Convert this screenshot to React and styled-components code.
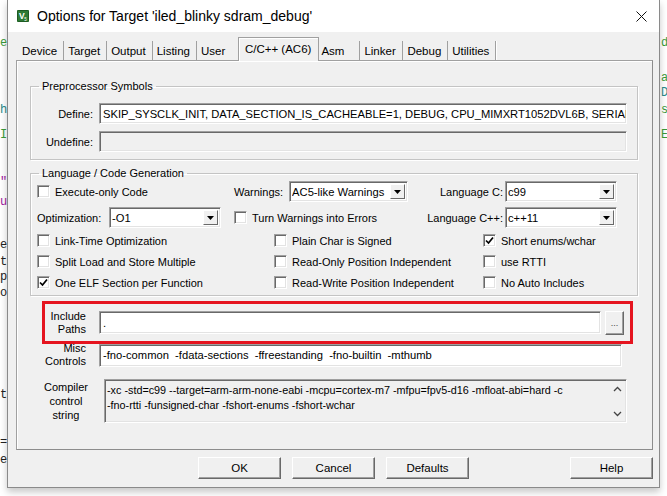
import React from "react";
import styled, { createGlobalStyle } from "styled-components";

const GlobalStyle = createGlobalStyle`
  html, body {
    margin: 0;
    padding: 0;
    background: #fff;
    overflow: hidden;
  }
  body {
    font-family: "Liberation Sans", Arial, sans-serif;
    color: #000;
  }
`;

const Desk = styled.div`
  display: flex;
  width: 667px;
  height: 496px;
  background: #fff;
`;

/* editor text peeking out on both sides of the dialog */
const Strip = styled.div`
  width: 7px;
  flex: none;
  overflow: hidden;
  display: flex;
  flex-direction: column;
  padding-left: ${(p) => (p.$right ? "1px" : "0")};
  box-sizing: border-box;
  font-family: "Liberation Mono", monospace;
  font-size: 12px;
`;

const CodeLine = styled.div`
  height: 14px;
  line-height: 14px;
  white-space: pre;
  color: ${(p) => p.$color};
`;

const Dialog = styled.div`
  position: relative;
  z-index: 1;
  width: 653px;
  height: 488px;
  flex: none;
  box-sizing: border-box;
  border: 1px solid #8a8a8a;
  border-top: none;
  background: #f0f0f0;
  display: flex;
  flex-direction: column;
  box-shadow: 0 4px 7px rgba(0, 0, 0, 0.22);
`;

const TitleBar = styled.div`
  height: 32px;
  flex: none;
  background: #fff;
  display: flex;
  align-items: center;
  padding: 0 12px 0 9px;
  gap: 8px;
`;

const Title = styled.div`
  flex: 1;
  font-size: 14px;
  color: #000;
  white-space: nowrap;
`;

const Body = styled.div`
  flex: 1;
  display: flex;
  flex-direction: column;
  padding: 5px 6px 8px 8px;
`;

const TabStrip = styled.div`
  position: relative;
  z-index: 2;
  display: flex;
  align-items: flex-end;
  height: 24px;
  margin-bottom: -1px;
  padding-left: 2px;
`;

const Tab = styled.div`
  box-sizing: border-box;
  min-width: 43px;
  font-size: 11.5px;
  white-space: nowrap;
  display: flex;
  align-items: center;
  background: #f0f0f0;
  ${(p) =>
    p.$active
      ? `
    height: 24px;
    margin: 0 -2px;
    padding: 0 7px 2px 6px;
    border: 1px solid #a0a0a0;
    border-bottom: none;
    box-shadow: inset 1px 1px 0 #fff;
    position: relative;
    z-index: 1;
  `
      : `
    height: 19px;
    margin-bottom: 1px;
    padding: 0 6px 0 4px;
    border-right: 1px solid #a0a0a0;
    box-shadow: 1px 0 0 #fff;
  `}
`;

const Panel = styled.div`
  width: 637px;
  height: 390px;
  box-sizing: border-box;
  border: 1px solid #a0a0a0;
  border-right-color: #8c8c8c;
  border-bottom-color: #8c8c8c;
  box-shadow: inset 1px 1px 0 #fff;
  display: flex;
  flex-direction: column;
  padding: 18px 14px 0 13px;
`;

const Group = styled.fieldset`
  margin: ${(p) => p.$top || 0}px 0 0 0;
  padding: ${(p) => p.$padTop}px 0 ${(p) => p.$padBottom}px 0;
  width: 608px;
  min-width: 0;
  box-sizing: border-box;
  border: 1px solid #c4c4c4;
  box-shadow: inset 1px 1px 0 #fff, 1px 1px 0 #fff;
`;

const Legend = styled.legend`
  margin-left: 8px;
  padding: 0 3px;
  font-size: 11px;
  line-height: 14px;
`;

const SymbolGrid = styled.div`
  display: grid;
  grid-template-columns: 62px 528px;
  column-gap: 6px;
  row-gap: 7px;
  align-items: center;
`;

const Label = styled.div`
  font-size: 11px;
  line-height: ${(p) => p.$lh || 14}px;
  text-align: ${(p) => p.$align || "right"};
  white-space: nowrap;
  padding-right: ${(p) => p.$pr || 0}px;
`;

const sunken = `
  border: 1px solid;
  border-color: #a0a0a0 #fff #fff #a0a0a0;
  box-shadow: inset 1px 1px 0 #696969, inset -1px -1px 0 #e3e3e3;
`;

const TextBox = styled.div`
  box-sizing: border-box;
  height: ${(p) => p.$h || 21}px;
  ${sunken}
  background: ${(p) => (p.$disabled ? "#f0f0f0" : "#fff")};
  font-size: 11.2px;
  padding: 0 3px;
  display: flex;
  align-items: center;
  white-space: pre;
  overflow: hidden;
`;

const OptionsGrid = styled.div`
  display: grid;
  grid-template-columns: 197px 185px 84px 112px;
  grid-auto-rows: 21px;
  row-gap: 5px;
  margin-left: 6px;
  align-items: center;
`;

const Inline = styled.div`
  display: flex;
  align-items: center;
  gap: ${(p) => p.$gap || 0}px;
`;

const SelectBox = styled.div`
  box-sizing: border-box;
  width: ${(p) => p.$w}px;
  height: 21px;
  ${sunken}
  background: #fff;
  display: flex;
  align-items: stretch;
  padding: 2px;
  margin-left: ${(p) => p.$ml || 0}px;
`;

const SelectValue = styled.div`
  flex: 1;
  font-size: 11.2px;
  display: flex;
  align-items: center;
  white-space: nowrap;
  overflow: hidden;
`;

const DropButton = styled.div`
  width: 15px;
  box-sizing: border-box;
  background: #f0f0f0;
  border: 1px solid;
  border-color: #fff #696969 #696969 #fff;
  display: flex;
  align-items: center;
  justify-content: center;
`;

const CheckGrid = styled.div`
  display: grid;
  grid-template-columns: 237px 209px 1fr;
  grid-auto-rows: 21px;
  margin: 2px 0 0 6px;
  align-items: center;
`;

const CheckRow = styled.div`
  display: flex;
  align-items: center;
  gap: 5px;
  font-size: 11px;
  white-space: nowrap;
`;

const Box = styled.div`
  width: 13px;
  height: 13px;
  box-sizing: border-box;
  ${sunken}
  background: #fff;
  display: flex;
  align-items: center;
  justify-content: center;
`;

const RedFrame = styled.div`
  box-sizing: border-box;
  width: 591px;
  height: 43px;
  margin: 5px 0 0 12px;
  border: 3px solid #e5141f;
  display: grid;
  grid-template-columns: 50px 502px 19px;
  column-gap: 4px;
  align-items: center;
`;

const SmallButton = styled.div`
  box-sizing: border-box;
  height: 24px;
  background: #f0f0f0;
  border: 1px solid;
  border-color: #fff #696969 #696969 #fff;
  box-shadow: inset -1px -1px 0 #a0a0a0;
  font-size: 9px;
  display: flex;
  align-items: flex-end;
  justify-content: center;
  padding-bottom: 6px;
  color: #444;
`;

const ControlRow = styled.div`
  display: grid;
  grid-template-columns: ${(p) => p.$label}px 523px;
  column-gap: ${(p) => p.$gap}px;
  align-items: center;
  margin-top: ${(p) => p.$mt}px;
`;

const ControlString = styled.div`
  box-sizing: border-box;
  height: 44px;
  ${sunken}
  background: #f0f0f0;
  display: flex;
`;

const ControlText = styled.div`
  flex: 1;
  font-size: 10.8px;
  line-height: 15px;
  padding: 3px 0 0 2px;
  white-space: pre;
  overflow: hidden;
`;

const ScrollCol = styled.div`
  width: 18px;
  display: flex;
  flex-direction: column;
  align-items: center;
  justify-content: space-between;
  padding: 6px 0 5px;
`;

const ButtonRow = styled.div`
  display: flex;
  width: 637px;
  gap: 11px;
  margin-top: 7px;
  padding-left: 182px;
  box-sizing: border-box;
`;

const PushButton = styled.div`
  box-sizing: border-box;
  width: 83px;
  height: 22px;
  margin-left: ${(p) => (p.$push ? "auto" : "0")};
  background: #f0f0f0;
  border: 1px solid;
  border-color: #fff #696969 #696969 #fff;
  box-shadow: inset -1px -1px 0 #a0a0a0;
  font-size: 11.5px;
  display: flex;
  align-items: center;
  justify-content: center;
`;

const leftCode = [
  [43, "e", "#3a9a3a"],
  [110, "h", "#2a8a8a"],
  [135, "I", "#3a9a3a"],
  [182, '"', "#a020a0"],
  [202, "u", "#a020a0"],
  [245, "e", "#222"],
  [262, "t", "#222"],
  [277, "p", "#222"],
  [293, "o", "#222"],
  [395, "t", "#222"],
  [442, "=", "#222"],
  [460, "e", "#222"],
];

const rightCode = [
  [43, "d", "#3a9a3a"],
  [78, "a", "#3a9a3a"],
  [93, "D", "#2a8a8a"],
  [110, "s", "#3a9a3a"],
  [135, "E", "#3a9a3a"],
];

const tabs = [
  "Device",
  "Target",
  "Output",
  "Listing",
  "User",
  "C/C++ (AC6)",
  "Asm",
  "Linker",
  "Debug",
  "Utilities",
];

function Code({ lines, right }) {
  let end = 0;
  return (
    <Strip $right={right}>
      {lines.map(([y, text, color]) => {
        const mt = y - 7 - end;
        end = y + 7;
        return (
          <CodeLine key={y} $color={color} style={{ marginTop: mt }}>
            {text}
          </CodeLine>
        );
      })}
    </Strip>
  );
}

function KeilIcon() {
  return (
    <svg width="12" height="12" viewBox="0 0 12 12">
      <rect x="0" y="0" width="12" height="12" rx="1" fill="#2f7a34" />
      <rect x="0.5" y="0.5" width="11" height="11" rx="1" fill="none" stroke="#1d5a22" />
      <text x="2" y="9" fontSize="8.5" fontWeight="bold" fill="#fff" fontFamily="Liberation Sans, sans-serif">
        V
      </text>
      <text x="7.3" y="10.5" fontSize="4.5" fill="#fff" fontFamily="Liberation Sans, sans-serif">
        5
      </text>
    </svg>
  );
}

function CloseIcon() {
  return (
    <svg width="11" height="11" viewBox="0 0 11 11">
      <path d="M0.5 0.5 L10.5 10.5 M10.5 0.5 L0.5 10.5" stroke="#111" strokeWidth="1" />
    </svg>
  );
}

function Triangle() {
  return (
    <svg width="7" height="4" viewBox="0 0 7 4">
      <path d="M0 0 H7 L3.5 4 Z" fill="#000" />
    </svg>
  );
}

function Select({ value, width, ml }) {
  return (
    <SelectBox $w={width} $ml={ml}>
      <SelectValue>{value}</SelectValue>
      <DropButton>
        <Triangle />
      </DropButton>
    </SelectBox>
  );
}

function Check({ label, checked }) {
  return (
    <CheckRow>
      <Box>
        {checked && (
          <svg width="9" height="9" viewBox="0 0 9 9">
            <path d="M1 4.5 L3.5 7 L8 1.5" stroke="#000" strokeWidth="1.7" fill="none" />
          </svg>
        )}
      </Box>
      {label}
    </CheckRow>
  );
}

function Chevron({ down }) {
  return (
    <svg width="9" height="6" viewBox="0 0 9 6">
      <path
        d={down ? "M1 1 L4.5 4.5 L8 1" : "M1 5 L4.5 1.5 L8 5"}
        stroke="#444"
        strokeWidth="1.3"
        fill="none"
      />
    </svg>
  );
}

export default function App() {
  return (
    <>
      <GlobalStyle />
      <Desk>
        <Code lines={leftCode} />
        <Dialog>
          <TitleBar>
            <KeilIcon />
            <Title>Options for Target 'iled_blinky sdram_debug'</Title>
            <CloseIcon />
          </TitleBar>
          <Body>
            <TabStrip>
              {tabs.map((t) => (
                <Tab key={t} $active={t === "C/C++ (AC6)"}>
                  {t}
                </Tab>
              ))}
            </TabStrip>
            <Panel>
              <Group $padTop={10} $padBottom={7}>
                <Legend>Preprocessor Symbols</Legend>
                <SymbolGrid>
                  <Label>Define:</Label>
                  <TextBox>
                    SKIP_SYSCLK_INIT, DATA_SECTION_IS_CACHEABLE=1, DEBUG, CPU_MIMXRT1052DVL6B, SERIAL_PORT_TYPE_UART=1
                  </TextBox>
                  <Label>Undefine:</Label>
                  <TextBox $disabled />
                </SymbolGrid>
              </Group>

              <Group $top={6} $padTop={1} $padBottom={2}>
                <Legend>Language / Code Generation</Legend>
                <OptionsGrid>
                  <Check label="Execute-only Code" />
                  <Inline $gap={6}>
                    <Label>Warnings:</Label>
                    <Select value="AC5-like Warnings" width={119} />
                  </Inline>
                  <Label>Language C:</Label>
                  <Select value="c99" width={112} ml={2} />

                  <Inline>
                    <Label $align="left" style={{ width: 72 }}>
                      Optimization:
                    </Label>
                    <Select value="-O1" width={112} />
                  </Inline>
                  <Check label="Turn Warnings into Errors" />
                  <Label>Language C++:</Label>
                  <Select value="c++11" width={112} ml={2} />
                </OptionsGrid>
                <CheckGrid>
                  <Check label="Link-Time Optimization" />
                  <Check label="Plain Char is Signed" />
                  <Check label="Short enums/wchar" checked />
                  <Check label="Split Load and Store Multiple" />
                  <Check label="Read-Only Position Independent" />
                  <Check label="use RTTI" />
                  <Check label="One ELF Section per Function" checked />
                  <Check label="Read-Write Position Independent" />
                  <Check label="No Auto Includes" />
                </CheckGrid>
              </Group>

              <RedFrame>
                <Label $lh={13} $pr={9}>
                  Include
                  <br />
                  Paths
                </Label>
                <TextBox $h={23}>.</TextBox>
                <SmallButton>...</SmallButton>
              </RedFrame>

              <ControlRow $label={56} $gap={13} $mt={-2}>
                <Label $lh={13}>
                  Misc
                  <br />
                  Controls
                </Label>
                <TextBox $h={23}>
                  -fno-common  -fdata-sections  -ffreestanding  -fno-builtin  -mthumb
                </TextBox>
              </ControlRow>

              <ControlRow $label={72} $gap={2} $mt={11}>
                <Label $align="center" $lh={14}>
                  Compiler
                  <br />
                  control
                  <br />
                  string
                </Label>
                <ControlString>
                  <ControlText>
                    {"-xc -std=c99 --target=arm-arm-none-eabi -mcpu=cortex-m7 -mfpu=fpv5-d16 -mfloat-abi=hard -c\n-fno-rtti -funsigned-char -fshort-enums -fshort-wchar"}
                  </ControlText>
                  <ScrollCol>
                    <Chevron />
                    <Chevron down />
                  </ScrollCol>
                </ControlString>
              </ControlRow>
            </Panel>
            <ButtonRow>
              <PushButton>OK</PushButton>
              <PushButton>Cancel</PushButton>
              <PushButton>Defaults</PushButton>
              <PushButton $push>Help</PushButton>
            </ButtonRow>
          </Body>
        </Dialog>
        <Code lines={rightCode} right />
      </Desk>
    </>
  );
}
